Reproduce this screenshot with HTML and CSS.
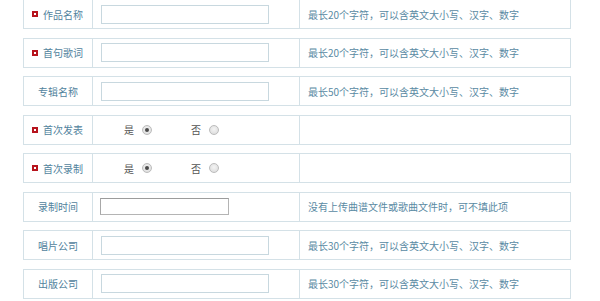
FILE: index.html
```html
<!DOCTYPE html>
<html lang="zh-CN">
<head>
<meta charset="utf-8">
<link rel="stylesheet" href="styles.css">
</head>
<body>
<div class="form">
  <div class="row">
    <div class="label req"><span class="mark"></span>作品名称</div>
    <div class="field"><input class="txt" type="text"></div>
    <div class="hint">最长20个字符，可以含英文大小写、汉字、数字</div>
  </div>
  <div class="row">
    <div class="label req"><span class="mark"></span>首句歌词</div>
    <div class="field"><input class="txt" type="text"></div>
    <div class="hint">最长20个字符，可以含英文大小写、汉字、数字</div>
  </div>
  <div class="row">
    <div class="label">专辑名称</div>
    <div class="field"><input class="txt" type="text"></div>
    <div class="hint">最长50个字符，可以含英文大小写、汉字、数字</div>
  </div>
  <div class="row">
    <div class="label req"><span class="mark"></span>首次发表</div>
    <div class="field radios">
      <span class="opt">是</span><span class="radio on"></span>
      <span class="opt opt2">否</span><span class="radio"></span>
    </div>
    <div class="hint"></div>
  </div>
  <div class="row">
    <div class="label req"><span class="mark"></span>首次录制</div>
    <div class="field radios">
      <span class="opt">是</span><span class="radio on"></span>
      <span class="opt opt2">否</span><span class="radio"></span>
    </div>
    <div class="hint"></div>
  </div>
  <div class="row">
    <div class="label">录制时间</div>
    <div class="field"><input class="txt date" type="text"></div>
    <div class="hint">没有上传曲谱文件或歌曲文件时，可不填此项</div>
  </div>
  <div class="row">
    <div class="label">唱片公司</div>
    <div class="field"><input class="txt" type="text"></div>
    <div class="hint">最长30个字符，可以含英文大小写、汉字、数字</div>
  </div>
  <div class="row">
    <div class="label">出版公司</div>
    <div class="field"><input class="txt" type="text"></div>
    <div class="hint">最长30个字符，可以含英文大小写、汉字、数字</div>
  </div>
</div>
</body>
</html>
```

FILE: styles.css
```css
html, body {
  margin: 0;
  padding: 0;
  background: #ffffff;
}
body {
  font-family: "Noto Sans CJK SC", "Noto Sans", sans-serif;
  font-size: 10px;
  overflow: hidden;
}
.form {
  width: 548px;
  margin: -1px 0 0 23px;
  display: flex;
  flex-direction: column;
  gap: 8.5px;
}
.row {
  display: flex;
  height: 28px;
  border: 1px solid #d4e1e7;
  background: #fff;
}
.label {
  width: 68px;
  flex: none;
  border-right: 1px solid #d4e1e7;
  display: flex;
  align-items: center;
  justify-content: center;
  color: #52839d;
}
.label.req {
  justify-content: flex-start;
  padding-left: 8px;
  width: 60px;
}
.mark {
  width: 2px;
  height: 2px;
  border: 2px solid #b7141d;
  background: #fff;
  margin-right: 5px;
  flex: none;
}
.field {
  flex: none;
  border-right: 1px solid #d4e1e7;
  display: flex;
  align-items: center;
  padding-left: 8px;
  box-sizing: border-box;
  width: 207px;
}
.txt {
  width: 168px;
  height: 19px;
  box-sizing: border-box;
  border: 1px solid #c8d8df;
  padding: 0;
  margin: 0;
  background: #fff;
  outline: none;
}
.txt.date {
  width: 129px;
  height: 17px;
  margin-left: -1px;
  border: 1px solid #b4b4b4;
  border-top-color: #9c9c9c;
  border-left-color: #a8a8a8;
}
.radios {
  padding-left: 31px;
}
.opt {
  color: #555;
  font-size: 10px;
}
.opt2 {
  margin-left: 39px;
}
.radio {
  width: 8px;
  height: 8px;
  border-radius: 50%;
  border: 1px solid #bcbcbc;
  background: radial-gradient(circle at 50% 40%, #f4f4f4, #d8d8d8);
  margin-left: 8px;
  position: relative;
  flex: none;
}
.radio.on::after {
  content: "";
  position: absolute;
  left: 2px;
  top: 2px;
  width: 4px;
  height: 4px;
  border-radius: 50%;
  background: #4a4a4a;
}
.hint {
  flex: 1;
  display: flex;
  align-items: center;
  padding-left: 8px;
  color: #5a8aa3;
  white-space: nowrap;
}
```
